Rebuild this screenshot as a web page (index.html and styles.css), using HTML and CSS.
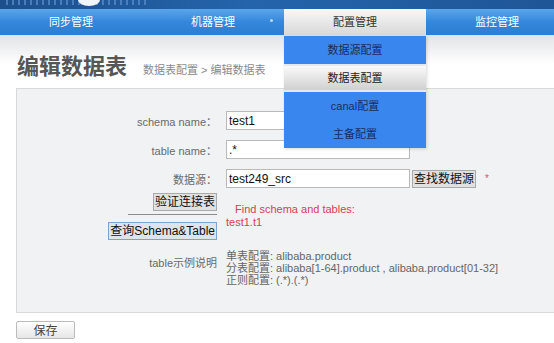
FILE: index.html
```html
<!DOCTYPE html>
<html lang="zh-CN">
<head>
    <meta charset="UTF-8">
    <meta name="viewport" content="width=device-width, initial-scale=1.0">
    <title>编辑数据表</title>
    <link rel="stylesheet" href="styles.css">
</head>
<body>
    <div id="top">
        <div class="banner">
            <span class="bits"></span>
            <span class="glow"></span>
        </div>
        <div class="nav">
            <div class="nav-item">同步管理</div>
            <div class="nav-item">机器管理<span class="dot"></span></div>
            <div class="nav-item active">配置管理
                <div class="menu">
                    <div class="menu-item">数据源配置</div>
                    <div class="menu-item sel">数据表配置</div>
                    <div class="menu-item">canal配置</div>
                    <div class="menu-item">主备配置</div>
                </div>
            </div>
            <div class="nav-item">监控管理</div>
        </div>
    </div>

    <div class="page-head">
        <h1>编辑数据表</h1>
        <span class="crumb">数据表配置 &gt; 编辑数据表</span>
    </div>

    <div class="panel">
        <div class="row">
            <div class="label">schema name：</div>
            <div class="field"><input type="text" class="text-in" value="test1"></div>
        </div>
        <div class="row">
            <div class="label">table name：</div>
            <div class="field"><input type="text" class="text-in" value=".*"></div>
        </div>
        <div class="row">
            <div class="label">数据源：</div>
            <div class="field">
                <input type="text" class="text-in" value="test249_src">
                <button class="btn">查找数据源</button>
                <span class="req">*</span>
            </div>
        </div>
        <div class="row verify">
            <div class="left-stack">
                <button class="btn">验证连接表</button>
                <div class="rule"></div>
                <button class="btn focus">查询Schema&amp;Table</button>
            </div>
            <div class="result">
                <div class="result-title">Find schema and tables:</div>
                <div>test1.t1</div>
            </div>
        </div>
        <div class="row examples">
            <div class="label ex-label">table示例说明</div>
            <div class="ex-lines">
                <div>单表配置: alibaba.product</div>
                <div>分表配置: alibaba[1-64].product , alibaba.product[01-32]</div>
                <div>正则配置: (.*).(.*)</div>
            </div>
        </div>
    </div>

    <div class="actions">
        <button class="save">保存</button>
    </div>
</body>
</html>
```

FILE: styles.css
```css
html {
    overflow: hidden;
}
body {
    margin: 0;
    font-family: "Liberation Sans", "Noto Sans CJK SC", sans-serif;
    background: #fff;
    color: #333;
}

/* 顶部横幅 */
.banner {
    height: 9px;
    position: relative;
    overflow: hidden;
    background: linear-gradient(90deg, #1d4f8c, #2464ab 45%, #1f5697);
}
.bits {
    display: block;
    width: 140px;
    height: 5px;
    margin-left: 6px;
    background: repeating-linear-gradient(90deg, #5a8fcd 0 2px, transparent 2px 6px);
    opacity: 0.7;
}
.glow {
    position: absolute;
    left: 78px;
    top: -6px;
    width: 22px;
    height: 12px;
    border-radius: 50%;
    background: #f2f6fb;
}

/* 导航 */
.nav {
    display: flex;
    height: 26px;
    background: linear-gradient(#5ba6ea, #3487db 50%, #2c7dd3);
    border-bottom: 1px solid #d5e3f2;
}
.nav-item {
    flex: 0 0 142px;
    position: relative;
    text-align: center;
    line-height: 26px;
    font-size: 11px;
    color: #fff;
}
.nav-item.active {
    background: linear-gradient(#f8f8f8, #d8d8d8);
    color: #333;
}
.dot {
    position: absolute;
    right: 11px;
    top: 10px;
    width: 3px;
    height: 3px;
    border-radius: 50%;
    background: #bcd8f4;
}
.menu {
    position: absolute;
    top: 27px;
    left: 0;
    width: 142px;
    z-index: 5;
    background: #e6e8ec;
    box-shadow: 1px 1px 3px rgba(0, 0, 0, 0.15);
}
.menu-item {
    height: 28px;
    line-height: 28px;
    background: #3a86ef;
    color: #1b2c60;
}
.menu-item.sel {
    height: 24px;
    line-height: 24px;
    margin: 2px 0;
    background: linear-gradient(#fafafa, #d0d0d0);
    color: #222;
}

/* 标题 */
.page-head {
    display: flex;
    align-items: baseline;
    padding: 16px 0 6px 17px;
    background: linear-gradient(#e2e4e7, #fff 28px);
}
.page-head h1 {
    margin: 0;
    font-size: 22px;
    line-height: 30px;
    font-weight: bold;
    color: #565656;
}
.crumb {
    margin-left: 16px;
    font-size: 11px;
    color: #8a8a8a;
}

/* 表单面板 */
.panel {
    margin-left: 16px;
    padding: 22px 0 26px;
    background: #f1f2f4;
    border: 1px solid #d9d9d9;
    border-right: none;
}
.row {
    display: grid;
    grid-template-columns: 200px 1fr;
    column-gap: 9px;
    align-items: center;
}
.row + .row {
    margin-top: 10px;
}
.row.verify {
    margin-top: 5px;
    align-items: start;
}
.row.examples {
    align-items: start;
}
.label {
    text-align: right;
    font-size: 11px;
    color: #6a6a6a;
}
.field {
    display: flex;
    align-items: center;
}
.text-in {
    width: 184px;
    height: 19px;
    box-sizing: border-box;
    margin: 0;
    padding: 0 2px;
    border: 1px solid #b9b9b9;
    background: #fff;
    font: 12px "Liberation Sans", sans-serif;
    color: #111;
}
.btn {
    height: 18px;
    margin: 0;
    padding: 0 1px;
    border: 1px solid #a9a9a9;
    background: #e1e1e1;
    font: 12px/16px "Liberation Sans", "Noto Sans CJK SC", sans-serif;
    color: #111;
}
.field .btn {
    margin-left: 2px;
}
.btn.focus {
    border-color: #7da2ce;
    background: #dfe4ea;
}
.req {
    margin-left: 9px;
    font-size: 10px;
    color: #e05070;
}
.left-stack {
    display: flex;
    flex-direction: column;
    align-items: flex-end;
}
.rule {
    width: 89px;
    height: 1px;
    margin: 3px 0 7px;
    background: #8c8c8c;
}
.result {
    padding-top: 10px;
    font-size: 11px;
    line-height: 13px;
    color: #dc3c52;
}
.result-title {
    padding-left: 9px;
}
.ex-label {
    margin-top: 7px;
    line-height: 12px;
}
.ex-lines {
    font-size: 11px;
    line-height: 12px;
    color: #666;
}

/* 保存 */
.actions {
    padding: 8px 0 0 16px;
}
.save {
    width: 59px;
    height: 18px;
    margin: 0;
    padding: 0;
    border: 1px solid #bbb;
    border-radius: 2px;
    background: linear-gradient(#fff, #e6e6e6);
    font: 12px/16px "Noto Sans CJK SC", sans-serif;
    color: #444;
}
```
